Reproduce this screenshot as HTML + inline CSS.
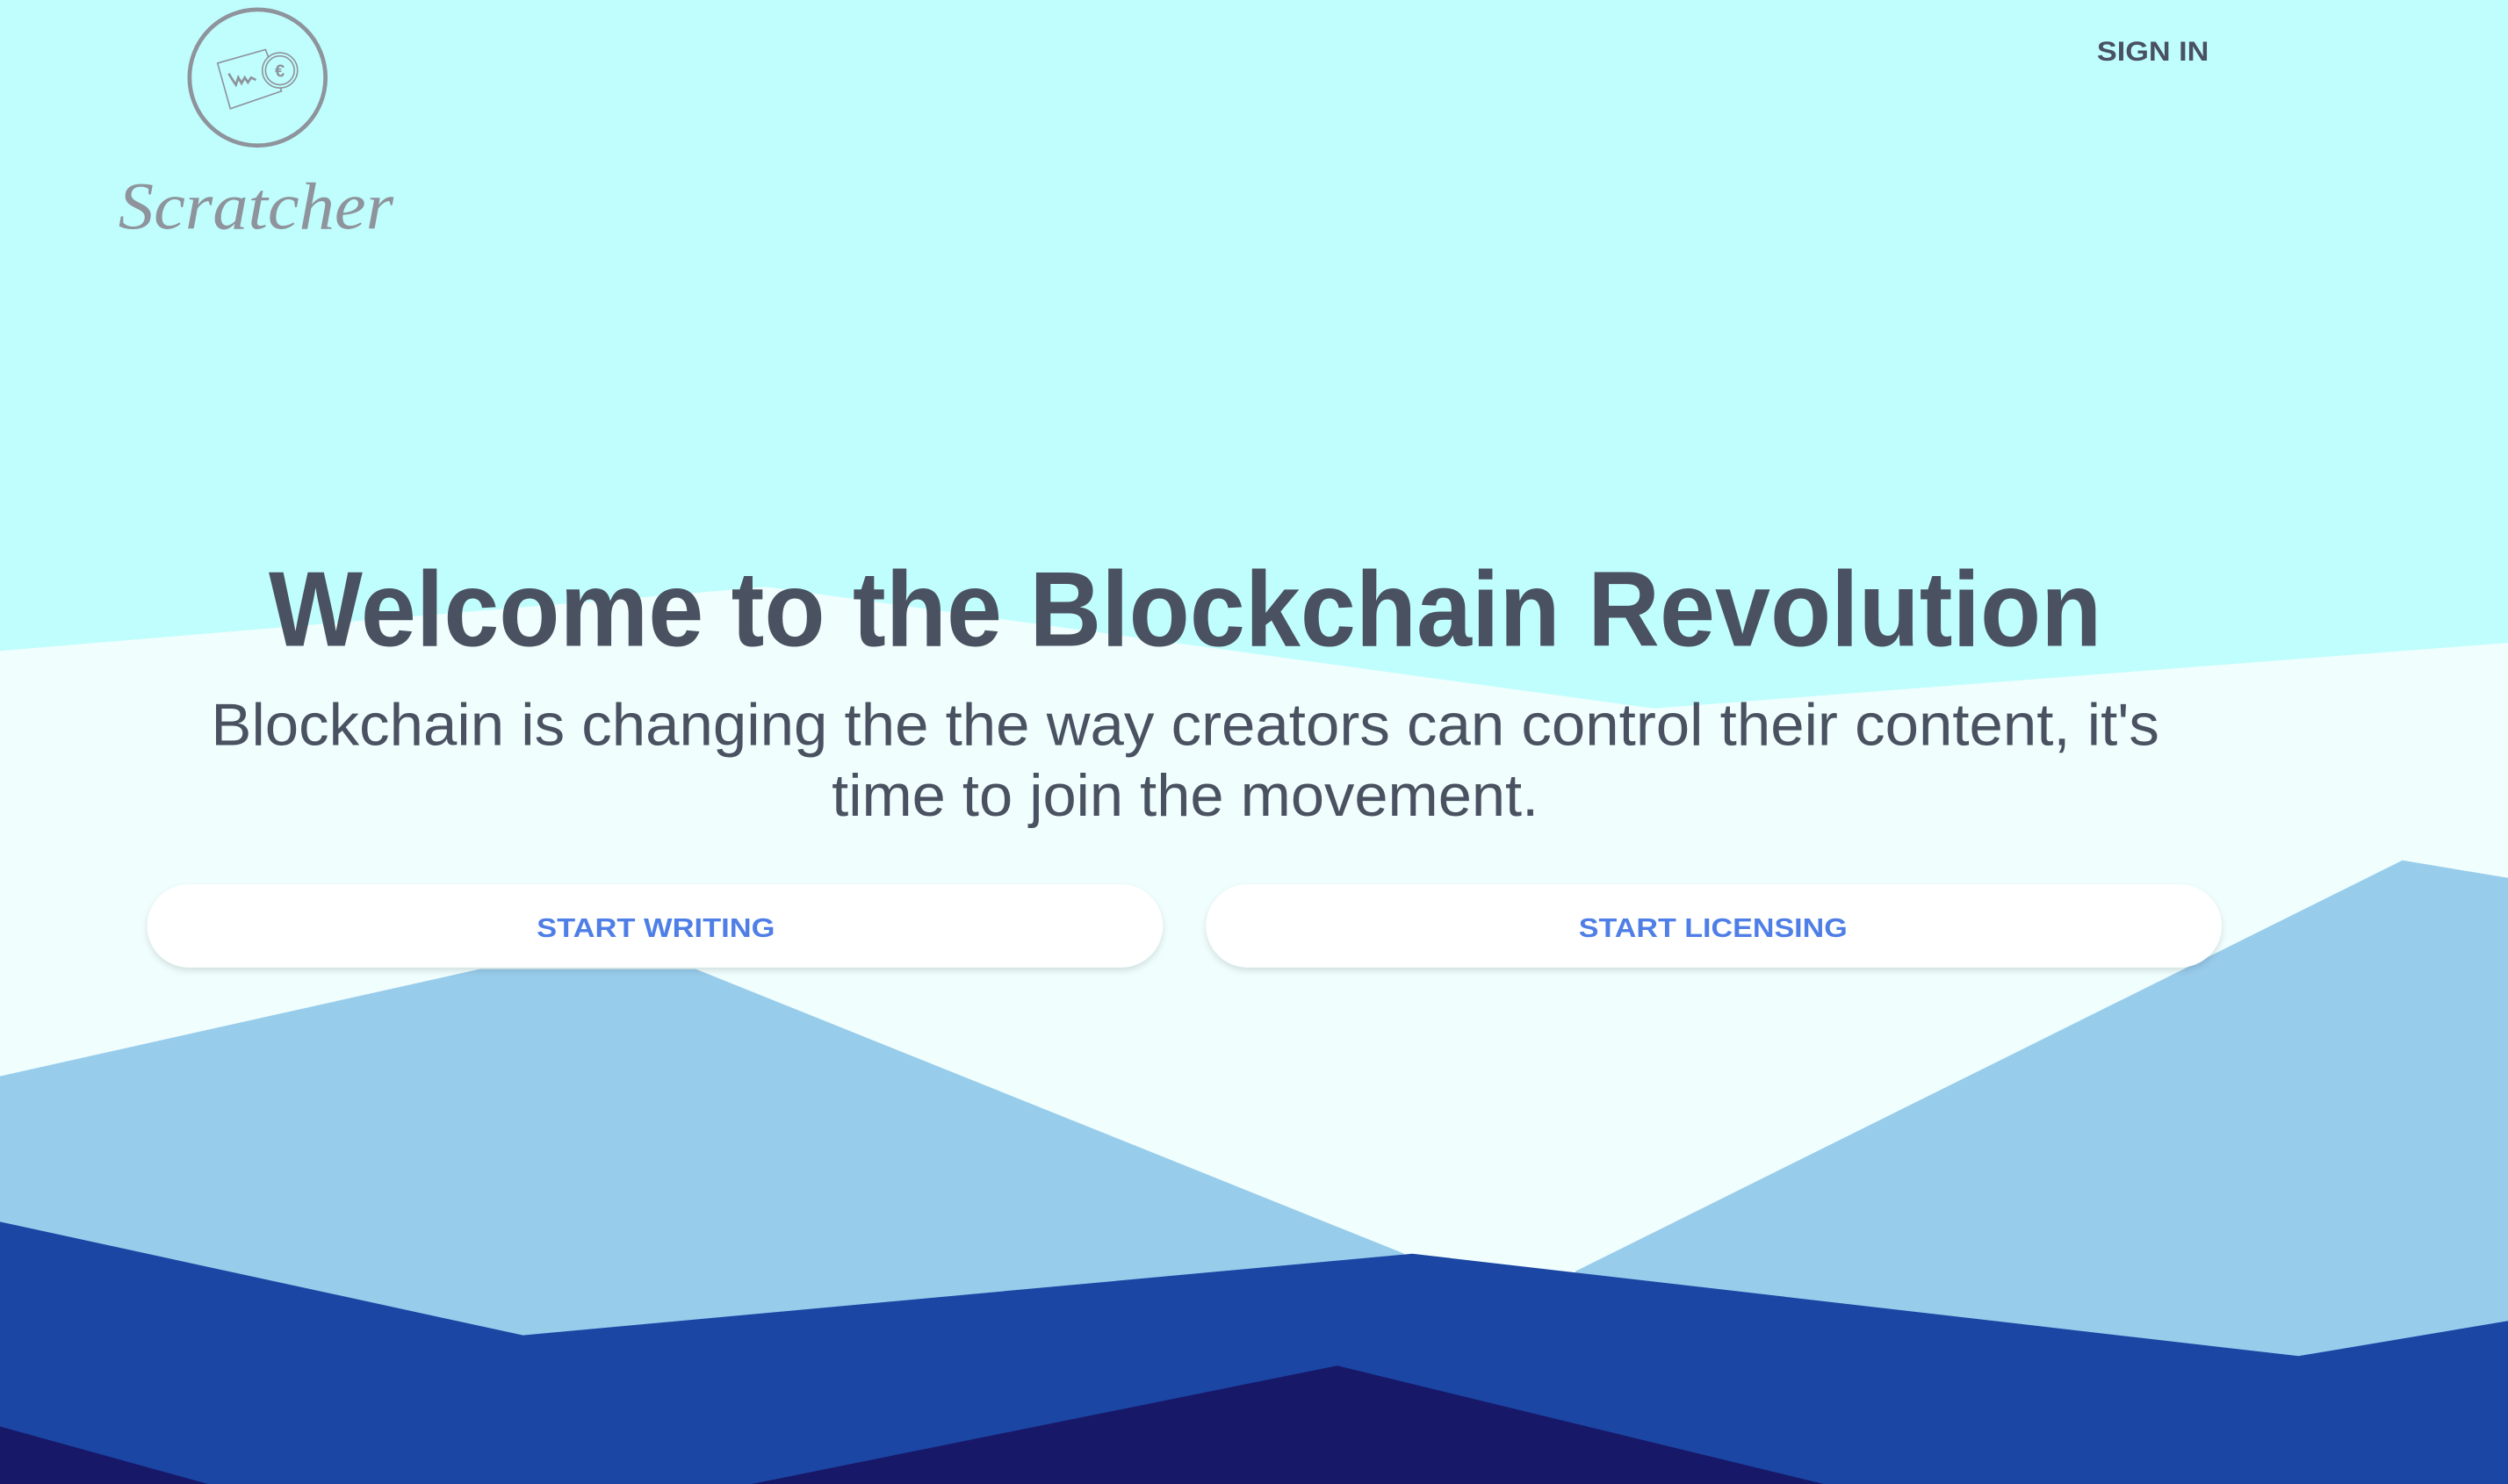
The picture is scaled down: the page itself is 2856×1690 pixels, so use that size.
<!DOCTYPE html>
<html><head><meta charset="utf-8"><style>
html,body{margin:0;padding:0;width:2856px;height:1690px;overflow:hidden;background:#c0fefe}
svg{display:block}
</style></head><body>
<svg width="2856" height="1690" viewBox="0 0 1568 928" preserveAspectRatio="none" xmlns="http://www.w3.org/2000/svg">
<defs>
<filter id="sh" x="-5%" y="-30%" width="110%" height="170%">
<feDropShadow dx="0" dy="2" stdDeviation="2" flood-color="#000" flood-opacity="0.12"/>
</filter>
</defs>
<rect width="1568" height="928" fill="#c0fefe"/>
<polygon points="0,407 479,367 1034,443 1568,402 1568,928 0,928" fill="#f0fefe"/>
<polygon points="0,673 300,606 435,606 878,784 700,900 0,900" fill="#98cceb"/>
<polygon points="985,795 1502,538 1568,549 1568,860 985,860" fill="#98cceb"/>
<polygon points="0,764 327,835 883,784 1437,848 1568,826 1568,928 0,928" fill="#1b46a4"/>
<polygon points="0,892 130,928 0,928" fill="#181868"/>
<polygon points="470,928 836,854 1140,928" fill="#181868"/>

<!-- logo -->
<circle cx="161" cy="48.5" r="42.5" fill="none" stroke="#8e939c" stroke-width="2.6"/>
<g fill="none" stroke="#8e939c" stroke-width="0.9">
<polygon points="136,39.5 166,31 176,57 144,68"/>
<path d="M143 46 Q146 51 147.5 53 L149 48.5 L151 52 L153 48.5 L155 51.5 L157 48.5 L160 50" stroke-width="1.5"/>
<circle cx="175" cy="44" r="11" fill="#c0fefe"/>
<circle cx="175" cy="44" r="9"/>
</g>
<text x="175" y="48" font-family="Liberation Sans, sans-serif" font-weight="bold" font-size="11" fill="#8e939c" text-anchor="middle">€</text>
<text x="160" y="143" font-family="Liberation Serif, serif" font-style="italic" font-size="42" fill="#8e939c" text-anchor="middle" textLength="172" lengthAdjust="spacingAndGlyphs">Scratcher</text>

<text x="1381" y="38" font-family="Liberation Sans, sans-serif" font-weight="bold" font-size="17.5" fill="#4a5160" text-anchor="end" textLength="70" lengthAdjust="spacingAndGlyphs">SIGN IN</text>

<text x="168" y="404" font-family="Liberation Sans, sans-serif" font-weight="bold" font-size="67" fill="#4a5160" textLength="1146" lengthAdjust="spacingAndGlyphs">Welcome to the Blockchain Revolution</text>
<text x="132" y="466" font-family="Liberation Sans, sans-serif" font-size="37" fill="#4a5160" textLength="1218" lengthAdjust="spacingAndGlyphs">Blockchain is changing the the way creators can control their content, it's</text>
<text x="520" y="510" font-family="Liberation Sans, sans-serif" font-size="37" fill="#4a5160" textLength="442" lengthAdjust="spacingAndGlyphs">time to join the movement.</text>

<rect x="92" y="553" width="635" height="52" rx="26" fill="#fff" filter="url(#sh)"/>
<rect x="754" y="553" width="635" height="52" rx="26" fill="#fff" filter="url(#sh)"/>
<text x="410" y="586" font-family="Liberation Sans, sans-serif" font-weight="bold" font-size="17" fill="#4f7fe6" text-anchor="middle" textLength="149" lengthAdjust="spacingAndGlyphs">START WRITING</text>
<text x="1071" y="586" font-family="Liberation Sans, sans-serif" font-weight="bold" font-size="17" fill="#4f7fe6" text-anchor="middle" textLength="168" lengthAdjust="spacingAndGlyphs">START LICENSING</text>
</svg>
</body></html>
